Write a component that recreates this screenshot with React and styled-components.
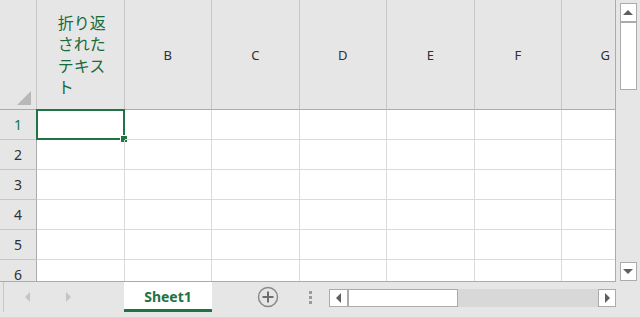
import React from "react";
import styled, { createGlobalStyle } from "styled-components";

const GlobalStyle = createGlobalStyle`
html, body {
  margin: 0;
  padding: 0;
  background: #ffffff;
}
body {
  font-family: "Noto Sans", "Noto Sans CJK JP", sans-serif;
}
`;

const GREEN = "#217346";
const COLS = ["A", "B", "C", "D", "E", "F", "G"];
const ROWS = [1, 2, 3, 4, 5, 6];

const Window = styled.div`
width: 640px;
height: 317px;
display: flex;
flex-direction: column;
overflow: hidden;
background: #e6e6e6;
`;

const Top = styled.div`
display: flex;
height: 282px;
`;

const Sheet = styled.div`
width: 616px;
height: 282px;
overflow: hidden;
display: grid;
grid-template-columns: 37px repeat(7, 87.5px);
grid-template-rows: 110px repeat(6, 30px);
background: #ffffff;
border-right: 1px solid #ababab;
border-bottom: 1px solid #ababab;
box-sizing: border-box;
`;

const Corner = styled.div`
position: relative;
background: #e6e6e6;
border-right: 1px solid #c6c6c6;
border-bottom: 1px solid #ababab;
`;

const CornerMark = styled.div`
position: absolute;
right: 5px;
bottom: 4px;
width: 0;
height: 0;
border-left: 14px solid transparent;
border-bottom: 14px solid #b8b8b8;
`;

const ColHead = styled.div`
background: #e6e6e6;
border-right: 1px solid #c6c6c6;
border-bottom: 1px solid #ababab;
display: flex;
align-items: center;
justify-content: center;
font-size: 13px;
color: #303030;
`;

const Wrapped = styled.div`
width: 49px;
margin-left: 4px;
font-family: "Noto Sans CJK JP", sans-serif;
font-size: 16px;
line-height: 21.5px;
color: #1a6b3a;
`;

const RowHead = styled.div`
background: #e6e6e6;
border-right: 1px solid #ababab;
border-bottom: 1px solid #c6c6c6;
display: flex;
align-items: center;
justify-content: center;
font-size: 14px;
color: ${(p) => (p.active ? GREEN : "#303030")};
`;

const Cell = styled.div`
position: relative;
border-right: 1px solid #dadada;
border-bottom: 1px solid #dadada;
`;

const Selection = styled.div`
position: absolute;
left: -1px;
top: -1px;
right: -1px;
bottom: -1px;
border: 2px solid ${GREEN};
`;

const Handle = styled.div`
position: absolute;
right: -5px;
bottom: -5px;
width: 6px;
height: 6px;
background: ${GREEN};
border: 1px solid #ffffff;
`;

const VScroll = styled.div`
width: 24px;
display: flex;
flex-direction: column;
align-items: center;
padding-top: 3px;
box-sizing: border-box;
background: #e6e6e6;
`;

const SBtn = styled.div`
width: 17px;
height: ${(p) => p.h || 18}px;
background: #ffffff;
border: 1px solid #ababab;
box-sizing: border-box;
display: flex;
align-items: center;
justify-content: center;
flex-shrink: 0;
`;

const VTrack = styled.div`
flex: 1;
`;

const Tri = styled.div`
width: 0;
height: 0;
${(p) =>
  p.dir === "up"
    ? `border-left: 5px solid transparent; border-right: 5px solid transparent; border-bottom: 5px solid #5f5f5f;`
    : p.dir === "down"
    ? `border-left: 5px solid transparent; border-right: 5px solid transparent; border-top: 5px solid #5f5f5f;`
    : p.dir === "left"
    ? `border-top: 5px solid transparent; border-bottom: 5px solid transparent; border-right: 5px solid ${p.c || "#5f5f5f"};`
    : `border-top: 5px solid transparent; border-bottom: 5px solid transparent; border-left: 5px solid ${p.c || "#5f5f5f"};`}
`;

const Bottom = styled.div`
height: 35px;
display: flex;
align-items: flex-start;
`;

const Nav = styled.div`
height: 30px;
display: flex;
align-items: center;
padding-left: 21px;
gap: 36px;
box-sizing: border-box;
border-left: 1px solid #c6c6c6;
margin-left: 3px;
width: 121px;
`;

const Tab = styled.div`
width: 88px;
height: 30px;
background: #ffffff;
border-bottom: 3px solid ${GREEN};
box-sizing: border-box;
display: flex;
align-items: center;
justify-content: center;
padding-top: 2px;
font-size: 14px;
font-weight: 700;
color: ${GREEN};
`;

const AddBtn = styled.div`
margin-left: 45px;
height: 30px;
display: flex;
align-items: center;
`;

const Dots = styled.div`
margin-left: 30px;
height: 30px;
display: flex;
flex-direction: column;
justify-content: center;
gap: 2px;
span {
  width: 3px;
  height: 3px;
  background: #9a9a9a;
  display: block;
}
`;

const HScroll = styled.div`
margin-left: 17px;
margin-top: 7px;
display: flex;
width: 287px;
height: 18px;
background: #d8d8d8;
`;

const HThumb = styled.div`
width: 110px;
height: 18px;
background: #ffffff;
border: 1px solid #ababab;
box-sizing: border-box;
`;

const HTrack = styled.div`
flex: 1;
`;

export default function App() {
  return (
    <>
      <GlobalStyle />
      <Window>
        <Top>
          <Sheet>
            <Corner>
              <CornerMark />
            </Corner>
            {COLS.map((c) => (
              <ColHead key={c}>
                {c === "A" ? <Wrapped>折り返されたテキスト</Wrapped> : c}
              </ColHead>
            ))}
            {ROWS.map((r) => (
              <React.Fragment key={r}>
                <RowHead active={r === 1}>{r}</RowHead>
                {COLS.map((c) => (
                  <Cell key={c}>
                    {r === 1 && c === "A" ? (
                      <Selection>
                        <Handle />
                      </Selection>
                    ) : null}
                  </Cell>
                ))}
              </React.Fragment>
            ))}
          </Sheet>
          <VScroll>
            <SBtn h={19}>
              <Tri dir="up" />
            </SBtn>
            <SBtn h={68} />
            <VTrack />
            <SBtn h={19} style={{ marginBottom: 1 }}>
              <Tri dir="down" />
            </SBtn>
          </VScroll>
        </Top>
        <Bottom>
          <Nav>
            <Tri dir="left" c="#c4c4c4" />
            <Tri dir="right" c="#c4c4c4" />
          </Nav>
          <Tab>Sheet1</Tab>
          <AddBtn>
            <svg width="22" height="22" viewBox="0 0 22 22">
              <circle cx="11" cy="11" r="9.5" fill="none" stroke="#8a8a8a" strokeWidth="1.5" />
              <path d="M11 5.5v11M5.5 11h11" stroke="#6e6e6e" strokeWidth="2" />
            </svg>
          </AddBtn>
          <Dots>
            <span />
            <span />
            <span />
          </Dots>
          <HScroll>
            <SBtn h={18} style={{ width: 19 }}>
              <Tri dir="left" />
            </SBtn>
            <HThumb />
            <HTrack />
            <SBtn h={18} style={{ width: 18 }}>
              <Tri dir="right" />
            </SBtn>
          </HScroll>
        </Bottom>
      </Window>
    </>
  );
}
